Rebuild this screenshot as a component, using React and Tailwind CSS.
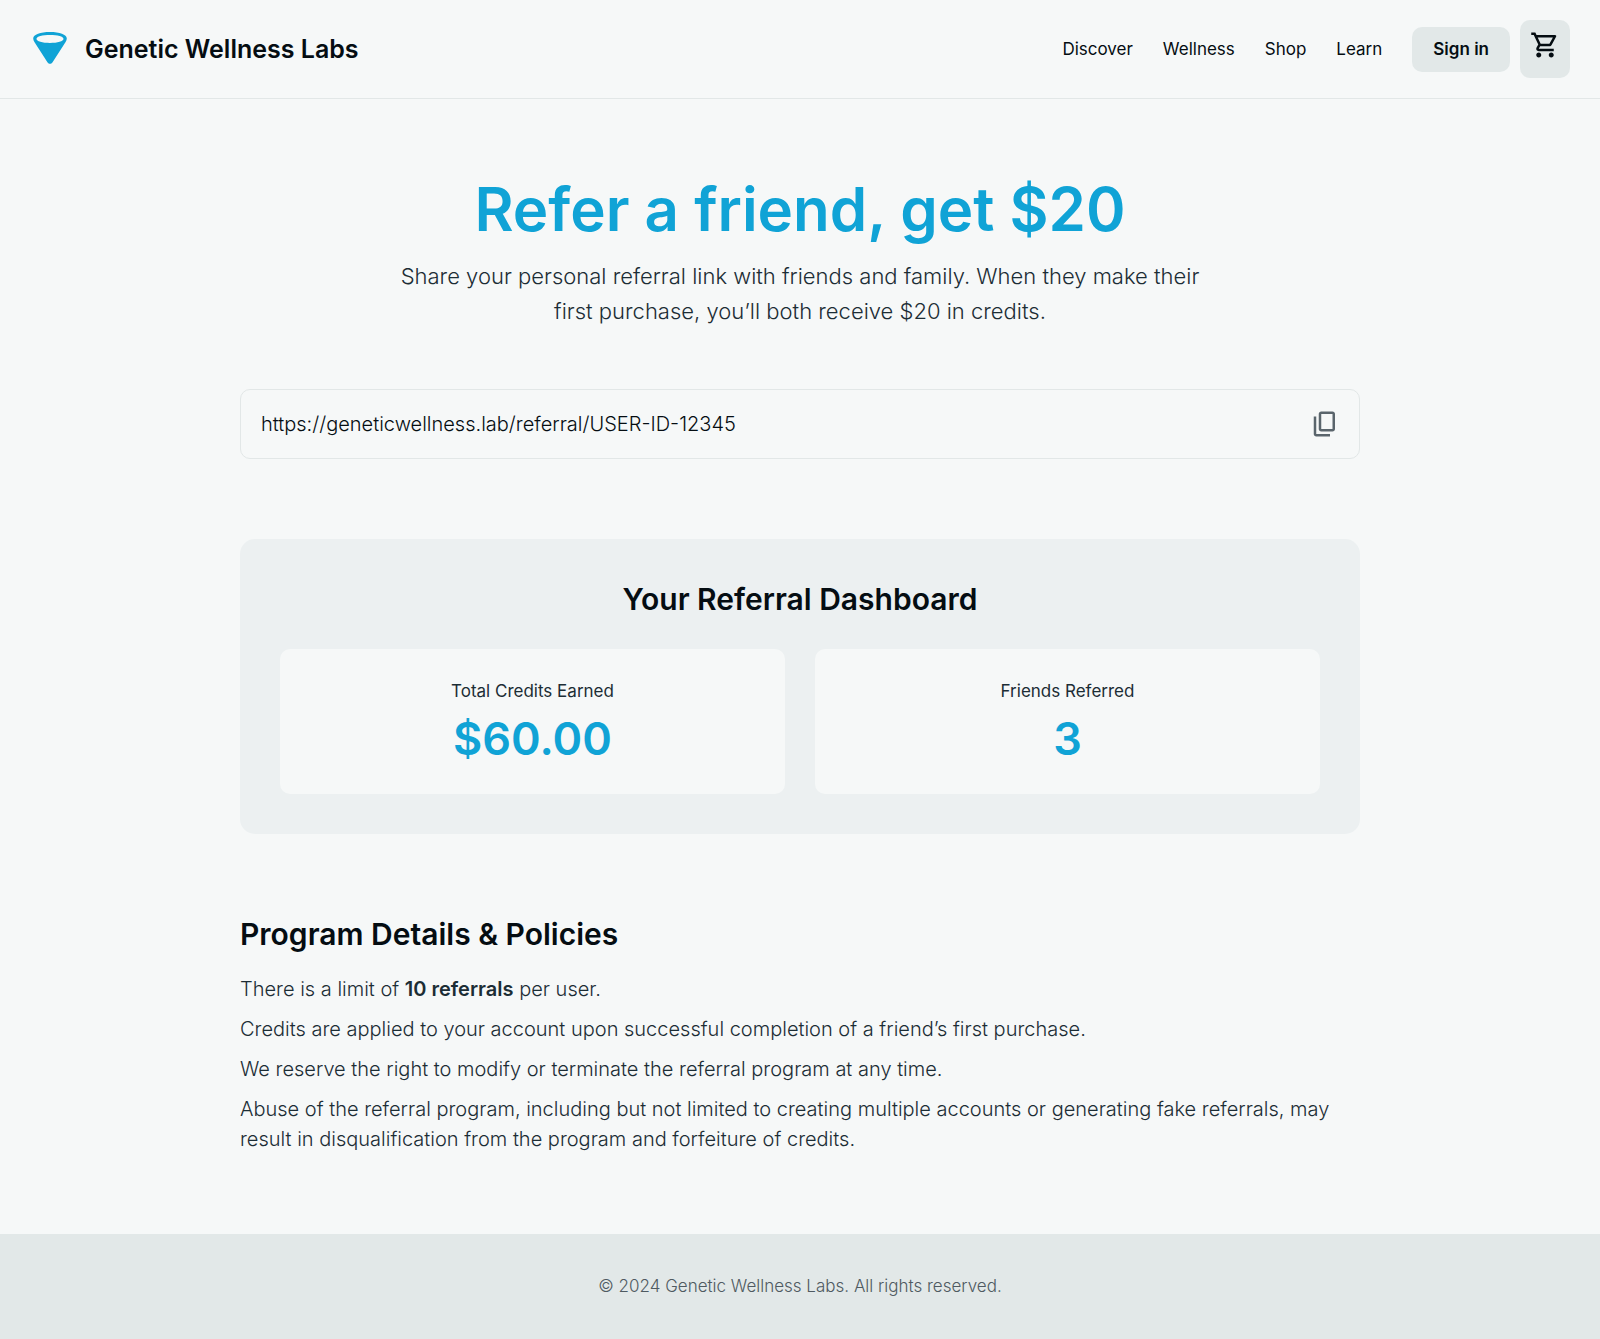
import { MdOutlineShoppingCart } from "react-icons/md";

const navItems = ["Discover", "Wellness", "Shop", "Learn"];

const stats = [
  { label: "Total Credits Earned", value: "$60.00" },
  { label: "Friends Referred", value: "3" },
];

function Logo() {
  return (
    <svg className="h-10 w-10" viewBox="0 0 40 40" aria-hidden="true">
      <path
        fill="#10a3d6"
        fillRule="evenodd"
        d="M20 3C10.500 3 3.200 5.600 3.200 9.500c0 1.200.5 2.300 1.200 3.400l13.200 20.500c1.100 1.800 3.700 1.800 4.800 0l13.200-20.500c.7-1.100 1.200-2.200 1.200-3.400C36.800 5.600 29.500 3 20 3Zm0 3.100c7.600 0 13.500 1.500 13.500 3.900s-5.900 3.900-13.500 3.900S6.500 12.400 6.500 10s5.900-3.900 13.500-3.900Z"
      />
    </svg>
  );
}

function CopyIcon() {
  return (
    <svg className="h-[30px] w-[30px]" viewBox="0 -960 960 960" fill="#5a656c" aria-hidden="true">
      <path d="M360-240q-33 0-56.500-23.500T280-320v-480q0-33 23.500-56.500T360-880h360q33 0 56.500 23.500T800-800v480q0 33-23.500 56.500T720-240H360Zm0-80h360v-480H360v480ZM200-80q-33 0-56.500-23.500T120-160v-560h80v560h440v80H200Z" />
    </svg>
  );
}

export default function App() {
  return (
    <div className="bg-[#f6f8f8] font-['Inter',sans-serif] text-[#050d12]">
      <header className="flex items-center justify-between border-b border-[#e2e7e7] px-[30px] py-5">
        <a href="#" className="flex items-center gap-[15px]">
          <Logo />
          <span className="text-[25px] leading-8 font-semibold">Genetic Wellness Labs</span>
        </a>
        <div className="flex items-center gap-[10px]">
          <nav className="mr-5 flex gap-[30px] text-[17px] leading-6">
            {navItems.map((item) => (
              <a key={item} href="#">{item}</a>
            ))}
          </nav>
          <button className="rounded-[10px] bg-[#e2e8e8] px-[21px] py-[10px] text-[17px] leading-[25px] font-semibold">Sign in</button>
          <button aria-label="Cart" className="flex h-[58px] w-[50px] justify-center rounded-[10px] bg-[#e2e8e8] pt-[10px]">
            <MdOutlineShoppingCart className="h-[30px] w-[30px]" />
          </button>
        </div>
      </header>

      <main className="mx-auto w-[70%] py-20">
        <section className="text-center">
          <h1 className="text-[60px] leading-[60px] font-semibold text-[#10a3d6]">Refer a friend, get $20</h1>
          <p className="mx-auto mt-5 max-w-[820px] text-[22px] leading-[35px] font-light text-[#1c2d35]">
            Share your personal referral link with friends and family. When they make their first purchase, you’ll both receive $20 in credits.
          </p>
        </section>

        <div className="mt-[60px] flex items-center rounded-[10px] border border-[#e2e7e7] py-[19px] pr-[19px] pl-5">
          <input
            readOnly
            aria-label="Referral link"
            value="https://geneticwellness.lab/referral/USER-ID-12345"
            className="h-[30px] min-w-0 flex-1 bg-transparent text-[20px] font-light outline-none"
          />
          <button aria-label="Copy referral link"><CopyIcon /></button>
        </div>

        <section className="mt-20 rounded-[15px] bg-[#ecf0f1] p-10 text-center">
          <h2 className="text-[30px] leading-10 font-semibold">Your Referral Dashboard</h2>
          <dl className="mt-[30px] grid grid-cols-2 gap-[30px]">
            {stats.map((stat) => (
              <div key={stat.label} className="rounded-[10px] bg-[#f6f8f8] p-[30px]">
                <dt className="text-[17px] leading-[25px] text-[#1c2d35]">{stat.label}</dt>
                <dd className="mt-[10px] text-[45px] leading-[50px] font-semibold text-[#10a3d6]">{stat.value}</dd>
              </div>
            ))}
          </dl>
        </section>

        <section className="mt-20">
          <h2 className="text-[30px] leading-10 font-semibold">Program Details &amp; Policies</h2>
          <ul className="mt-5 flex flex-col gap-[10px] text-[20px] leading-[30px] font-light text-[#1c2d35]">
            <li>There is a limit of <strong className="font-semibold">10 referrals</strong> per user.</li>
            <li>Credits are applied to your account upon successful completion of a friend’s first purchase.</li>
            <li>We reserve the right to modify or terminate the referral program at any time.</li>
            <li>Abuse of the referral program, including but not limited to creating multiple accounts or generating fake referrals, may result in disqualification from the program and forfeiture of credits.</li>
          </ul>
        </section>
      </main>

      <footer className="bg-[#e2e8e8] px-5 py-10 text-center text-[17px] leading-[25px] font-light text-[#4f5a61]">
        © 2024 Genetic Wellness Labs. All rights reserved.
      </footer>
    </div>
  );
}
